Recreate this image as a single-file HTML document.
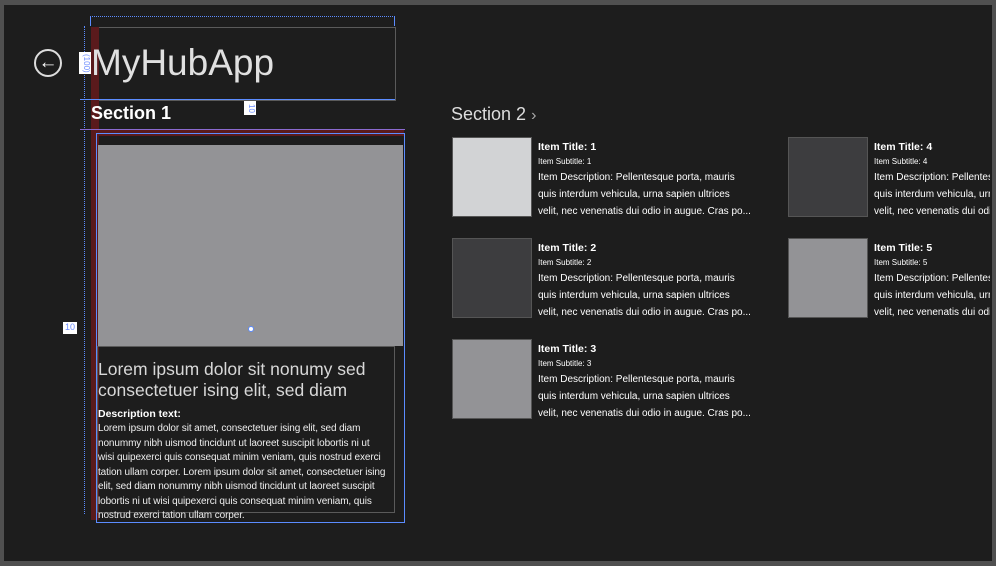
<!DOCTYPE html>
<html><head><style>
body{margin:0;width:996px;height:566px;overflow:hidden;background:#1d1d1d;font-family:"Liberation Sans",sans-serif;color:#fff;position:relative}
.a{position:absolute}
.frame{left:0;top:0;width:988px;height:556px;border:4px solid #505050;border-top-width:5px;border-bottom-width:5px}
.it{position:absolute;width:340px;height:80px}
.it .sq{position:absolute;left:0;top:0;width:78px;height:78px;border:1px solid #555}
.it .t{position:absolute;left:86px;top:4px;font-size:10.5px;font-weight:bold}
.it .s{position:absolute;left:86px;top:20px;font-size:8px}
.it .d{position:absolute;left:86px;top:32px;font-size:10px;line-height:17px;width:240px;white-space:nowrap;letter-spacing:0px}
</style></head><body>
<div class="a frame"></div>
<div class="a" style="left:34px;top:49px;width:24px;height:24px;border:2px solid #ddd;border-radius:50%;font-size:19px;line-height:23px;text-align:center;font-weight:bold">&#8592;</div>
<div class="a" style="left:90px;top:16px;width:305px;border-top:1px dotted #5b8cff"></div>
<div class="a" style="left:90px;top:16px;height:10px;border-left:1px solid #5b8cff"></div>
<div class="a" style="left:394px;top:16px;height:10px;border-left:1px solid #5b8cff"></div>
<div class="a" style="left:84px;top:26px;height:488px;border-left:1px dotted #5b8cff"></div>
<div class="a" style="left:91px;top:27px;width:303px;height:72px;border:1px solid #5a5a5a"></div>
<div class="a" style="left:91px;top:27px;width:8px;height:493px;background:#5a1a1c"></div>
<div class="a" style="left:79px;top:52px;width:12px;height:22px;background:#fff;color:#6b8cff;font-size:8px;writing-mode:vertical-rl;text-align:center">(100)</div>
<div class="a" style="left:91px;top:42px;font-size:37px;color:#e0e0e0">MyHubApp</div>
<div class="a" style="left:80px;top:99px;width:315px;border-top:1px solid #5b8cff"></div>
<div class="a" style="left:91px;top:103px;font-size:18px;font-weight:bold">Section 1</div>
<div class="a" style="left:244px;top:101px;width:12px;height:14px;background:#fff;color:#6b8cff;font-size:8px;writing-mode:vertical-rl;text-align:center">10</div>
<div class="a" style="left:80px;top:129px;width:325px;border-top:1px solid #8a6ad0"></div>
<div class="a" style="left:96px;top:130px;width:308px;height:6px;background:#5a1a1c"></div>
<div class="a" style="left:96px;top:133px;width:309px;height:390px;border:1px solid #5b8cff;box-sizing:border-box"></div>
<div class="a" style="left:98px;top:145px;width:305px;height:201px;background:#939396"></div>
<div class="a" style="left:97px;top:346px;width:298px;height:167px;border:1px solid #5a5a5a;box-sizing:border-box"></div>
<div class="a" style="left:63px;top:322px;width:14px;height:12px;background:#fff;color:#6b8cff;font-size:9px;text-align:center">10</div>
<div class="a" style="left:248px;top:326px;width:4px;height:4px;border:1px solid #5b8cff;border-radius:50%;background:#fff"></div>
<div class="a" style="left:98px;top:359px;font-size:17.5px;line-height:21px;color:#d8d8d8;width:310px">Lorem ipsum dolor sit nonumy sed consectetuer ising elit, sed diam</div>
<div class="a" style="left:98px;top:408px;font-size:10.5px;font-weight:bold">Description text:</div>
<div class="a" style="left:98px;top:422px;font-size:10px;line-height:14.5px;color:#eee;white-space:nowrap;letter-spacing:-0.1px">Lorem ipsum dolor sit amet, consectetuer ising elit, sed diam<br>nonummy nibh uismod tincidunt ut laoreet suscipit lobortis ni ut<br>wisi quipexerci quis consequat minim veniam, quis nostrud exerci<br>tation ullam corper. Lorem ipsum dolor sit amet, consectetuer ising<br>elit, sed diam nonummy nibh uismod tincidunt ut laoreet suscipit<br>lobortis ni ut wisi quipexerci quis consequat minim veniam, quis<br>nostrud exerci tation ullam corper.</div>
<div class="a" style="left:451px;top:104px;font-size:18px;color:#ddd">Section 2 <span style="font-size:16px;color:#aaa">&#8250;</span></div>
<div class="it" style="left:452px;top:137px"><div class="sq" style="background:#d2d3d5"></div><div class="t">Item Title: 1</div><div class="s">Item Subtitle: 1</div><div class="d">Item Description: Pellentesque porta, mauris<br>quis interdum vehicula, urna sapien ultrices<br>velit, nec venenatis dui odio in augue. Cras po...</div></div>
<div class="it" style="left:452px;top:238px"><div class="sq" style="background:#3d3d3f"></div><div class="t">Item Title: 2</div><div class="s">Item Subtitle: 2</div><div class="d">Item Description: Pellentesque porta, mauris<br>quis interdum vehicula, urna sapien ultrices<br>velit, nec venenatis dui odio in augue. Cras po...</div></div>
<div class="it" style="left:452px;top:339px"><div class="sq" style="background:#939396"></div><div class="t">Item Title: 3</div><div class="s">Item Subtitle: 3</div><div class="d">Item Description: Pellentesque porta, mauris<br>quis interdum vehicula, urna sapien ultrices<br>velit, nec venenatis dui odio in augue. Cras po...</div></div>
<div style="position:absolute;left:788px;top:0;width:202px;height:560px;overflow:hidden">
<div class="it" style="left:0;top:137px"><div class="sq" style="background:#3d3d3f"></div><div class="t">Item Title: 4</div><div class="s">Item Subtitle: 4</div><div class="d">Item Description: Pellentesque porta, mauris<br>quis interdum vehicula, urna sapien ultrices<br>velit, nec venenatis dui odio in augue. Cras po...</div></div>
<div class="it" style="left:0;top:238px"><div class="sq" style="background:#939396"></div><div class="t">Item Title: 5</div><div class="s">Item Subtitle: 5</div><div class="d">Item Description: Pellentesque porta, mauris<br>quis interdum vehicula, urna sapien ultrices<br>velit, nec venenatis dui odio in augue. Cras po...</div></div>
</div>
</body></html>
